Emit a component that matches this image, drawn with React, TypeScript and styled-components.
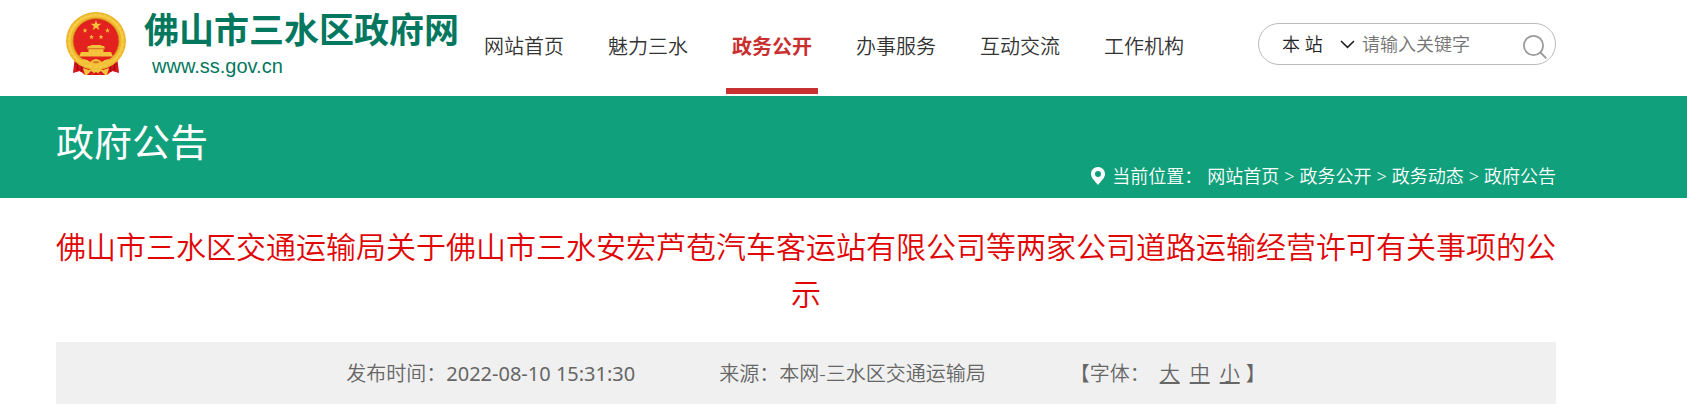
import React from 'react';
import styled, {createGlobalStyle} from 'styled-components';

const theme = {
    green: '#10a07b',
    logo: '#04785f',
    red: '#c93030',
    title: '#e10606',
    text: '#333',
    meta: '#666',
    bar: '#f0f0f0',
};

const navItems = ['网站首页', '魅力三水', '政务公开', '办事服务', '互动交流', '工作机构'];
const crumbs = ['网站首页', '政务公开', '政务动态', '政府公告'];
const sizes = ['大', '中', '小'];

const star = (cx: number, cy: number, r: number) =>
    Array.from({length: 10}, (_, i) => {
        const radius = i % 2 ? r * 0.4 : r;
        const a = (Math.PI / 5) * i - Math.PI / 2;
        return `${(cx + radius * Math.cos(a)).toFixed(2)},${(cy + radius * Math.sin(a)).toFixed(2)}`;
    }).join(' ');

const Emblem: React.FC = () => (
    <svg width="60" height="64" viewBox="0 0 60 64" aria-hidden="true">
        <path d="M9 44 L7 61 L14 59 L19 63 H41 L46 59 L53 61 L51 44 Z" fill="#d5151b"/>
        <path d="M10 47 L12 58 M50 47 L48 58 M16 52 L15 60 M44 52 L45 60" stroke="#9c0c12" strokeWidth="1.2"/>
        <ellipse cx="30" cy="29" rx="30" ry="29" fill="#eeb52a"/>
        <ellipse cx="30" cy="29" rx="27" ry="26" fill="none" stroke="#f6cb45" strokeWidth="3"/>
        <ellipse cx="30" cy="29" rx="28" ry="27" fill="none" stroke="#e3a623" strokeWidth="0.6" strokeDasharray="2 3"/>
        <ellipse cx="30" cy="29" rx="23" ry="22.5" fill="#e3211f" stroke="#c98a18" strokeWidth="0.8"/>
        <g fill="#f5c33b">
            <polygon points={star(30, 13.5, 5.6)}/>
            <polygon points={star(19, 18.5, 2.7)}/>
            <polygon points={star(41.5, 18.5, 2.7)}/>
            <polygon points={star(25.5, 25, 2.7)}/>
            <polygon points={star(35, 25, 2.7)}/>
            <path d="M22 34 L21 36.5 H39 L38 34 H35 L36 33 H24 L25 34 Z"/>
            <path d="M22.5 37 H37.5 V40 H45 L47 44.5 H13 L15 40 H22.5 Z"/>
        </g>
        <path d="M21 37 H39" stroke="#c98a18" strokeWidth="0.7"/>
        <path d="M11 49 Q20 45 24 50 Q27 47 30 47 Q33 47 36 50 Q40 45 49 49 Q42 55 35 53 Q30 57 25 53 Q18 55 11 49 Z" fill="#f5c33b"/>
        <path d="M26 50 Q30 48 34 50 Q30 53 26 50 Z" fill="#d7821d"/>
        <path d="M17 56 L23 58 Q30 54 37 58 L43 56 L41 63 H35 L30 60 L25 63 H19 Z" fill="#f5c33b"/>
        <path d="M21 63 L25 59 L28 61 L25 63 Z M39 63 L35 59 L32 61 L35 63 Z" fill="#d5151b"/>
    </svg>
);

const App: React.FC = () => {
    return (
        <>
            <GlobalStyle/>
            <Header>
                <Logo href="#">
                    <Emblem/>
                    <LogoText>
                        <LogoName>佛山市三水区政府网</LogoName>
                        <LogoUrl>www.ss.gov.cn</LogoUrl>
                    </LogoText>
                </Logo>
                <Nav>
                    {navItems.map(item => (
                        <NavLink key={item} href="#" $active={item === '政务公开'}>{item}</NavLink>
                    ))}
                </Nav>
                <Search role="search" onSubmit={e => e.preventDefault()}>
                    <Scope>
                        <ScopeSelect aria-label="搜索范围">
                            <option>本 站</option>
                        </ScopeSelect>
                        <svg width="15" height="9" viewBox="0 0 15 9" aria-hidden="true">
                            <path d="M1 1 L7.5 7.4 L14 1" fill="none" stroke="#222" strokeWidth="1.6"/>
                        </svg>
                    </Scope>
                    <Keyword type="text" aria-label="关键字" placeholder="请输入关键字"/>
                    <SearchButton type="submit" aria-label="搜索">
                        <svg width="24" height="24" viewBox="0 0 24 24" fill="none" stroke="#999" strokeWidth="1.8">
                            <circle cx="10.5" cy="10.5" r="9.6"/>
                            <path d="M17 17 L23.3 23.3"/>
                        </svg>
                    </SearchButton>
                </Search>
            </Header>
            <Banner>
                <BannerTitle>政府公告</BannerTitle>
                <Crumbs aria-label="当前位置">
                    <svg width="14" height="18" viewBox="0 0 14 18" aria-hidden="true">
                        <path fillRule="evenodd" fill="#fff" d="M7 0 C3 0 0 3 0 7 C0 11 4 14 7 18 C10 14 14 11 14 7 C14 3 11 0 7 0 Z M7 4 A3 3 0 1 1 7 10 A3 3 0 1 1 7 4 Z"/>
                    </svg>
                    <CrumbLabel>当前位置：</CrumbLabel>
                    {crumbs.map((item, i) => (
                        <React.Fragment key={item}>
                            {i > 0 && <span>&gt;</span>}
                            <CrumbLink href="#">{item}</CrumbLink>
                        </React.Fragment>
                    ))}
                </Crumbs>
            </Banner>
            <Article>
                <Title>佛山市三水区交通运输局关于佛山市三水安宏芦苞汽车客运站有限公司等两家公司道路运输经营许可有关事项的公示</Title>
                <Meta>
                    <span>发布时间：<PublishTime>2022-08-10 15:31:30</PublishTime></span>
                    <span>来源：本网-三水区交通运输局</span>
                    <FontSizes>
                        <span>【字体：</span>
                        {sizes.map(size => <SizeButton key={size} type="button">{size}</SizeButton>)}
                        <span>】</span>
                    </FontSizes>
                </Meta>
            </Article>
        </>
    );
};

export default App;


const GlobalStyle = createGlobalStyle`
    * {
        box-sizing: border-box;
    }

    body {
        margin: 0;
        background: #fff;
        color: ${theme.text};
        font-family: "Noto Sans", "Noto Sans CJK SC", sans-serif;
        font-size: 20px;
        font-weight: 350;
    }

    a {
        color: inherit;
        text-decoration: none;
    }

    button, input, select {
        font-family: inherit;
        font-weight: inherit;
        border: none;
        background: none;
        padding: 0;
        outline: none;
    }
`;

const Header = styled.header`
    display: flex;
    align-items: flex-start;
    height: 96px;
    padding: 0 131px 0 66px;
`;

const Logo = styled.a`
    display: flex;
    gap: 18px;
    padding-top: 12px;
    color: ${theme.logo};
`;

const LogoText = styled.div`
    display: flex;
    flex-direction: column;
    white-space: nowrap;
`;

const LogoName = styled.span`
    font-size: 35px;
    font-weight: 700;
    line-height: 36px;
`;

const LogoUrl = styled.span`
    padding: 5px 0 0 8px;
    font-family: "Liberation Sans", sans-serif;
    font-size: 20px;
    line-height: 26px;
`;

const Nav = styled.nav`
    display: flex;
    gap: 32px;
    margin-left: 19px;
`;

const NavLink = styled.a<{$active: boolean}>`
    height: 94px;
    padding: 0 6px;
    line-height: 94px;
    white-space: nowrap;
    color: ${({$active}) => $active ? theme.red : theme.text};
    font-weight: ${({$active}) => $active ? 700 : 350};
    border-bottom: 6px solid ${({$active}) => $active ? theme.red : 'transparent'};
`;

const Search = styled.form`
    display: flex;
    align-items: center;
    width: 298px;
    height: 42px;
    margin: 23px 0 0 auto;
    padding: 0 8px 0 23px;
    border: 1px solid #bbb;
    border-radius: 21px;
`;

const Scope = styled.label`
    display: flex;
    align-items: center;
    gap: 16px;
`;

const ScopeSelect = styled.select`
    appearance: none;
    width: 42px;
    font-size: 18px;
    color: #222;
`;

const Keyword = styled.input`
    flex: 1;
    min-width: 0;
    margin-left: 7px;
    font-size: 18px;
    color: ${theme.text};

    &::placeholder {
        color: #757575;
    }
`;

const SearchButton = styled.button`
    display: flex;
    padding-top: 6px;
    cursor: pointer;
`;

const Banner = styled.section`
    display: flex;
    justify-content: space-between;
    height: 102px;
    padding: 0 131px 0 56px;
    background: ${theme.green};
    color: #fff;
`;

const BannerTitle = styled.h2`
    margin: 0;
    font-size: 38px;
    font-weight: 400;
    line-height: 90px;
`;

const Crumbs = styled.nav`
    display: flex;
    align-items: center;
    align-self: flex-end;
    gap: 5px;
    padding-bottom: 8px;
    font-size: 18px;
    line-height: 28px;
    white-space: nowrap;
`;

const CrumbLabel = styled.span`
    margin-left: 2px;
`;

const CrumbLink = styled.a`
    &:hover {
        text-decoration: underline;
    }
`;

const Article = styled.main`
    padding: 25px 131px 15px 56px;
`;

const Title = styled.h1`
    margin: 0 0 25px;
    color: ${theme.title};
    font-size: 30px;
    font-weight: 350;
    line-height: 47px;
    text-align: center;
`;

const Meta = styled.div`
    display: flex;
    justify-content: center;
    gap: 84px;
    padding-top: 2px;
    background: ${theme.bar};
    color: ${theme.meta};
    line-height: 60px;
`;

const PublishTime = styled.time`
    font-weight: 400;
`;

const FontSizes = styled.div`
    display: flex;
    gap: 10px;

    & > span:last-child {
        margin-left: -4px;
    }
`;

const SizeButton = styled.button`
    color: inherit;
    font-size: 20px;
    line-height: inherit;
    text-decoration: underline;
    cursor: pointer;
`;
